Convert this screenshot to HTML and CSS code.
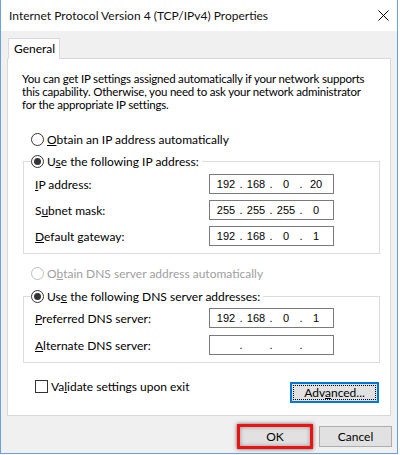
FILE: index.html
```html
<!DOCTYPE html>
<html lang="en">
<head>
    <meta charset="UTF-8">
    <title>Internet Protocol Version 4 (TCP/IPv4) Properties</title>
    <link rel="stylesheet" href="styles.css">
</head>
<body>
    <div class="window">
        <div class="titlebar">
            <span class="title">Internet Protocol Version 4 (TCP/IPv4) Properties</span>
            <svg class="close" width="11" height="11" viewBox="0 0 11 11">
                <path d="M0.5 0.5 L10.5 10.5 M10.5 0.5 L0.5 10.5" stroke="#000" stroke-width="1" fill="none"/>
            </svg>
        </div>

        <div class="client">
            <div class="tabs">
                <div class="tab">General</div>
            </div>

            <div class="panel">
                <div class="intro">
                    <div>You can get IP settings assigned automatically if your network supports</div>
                    <div>this capability. Otherwise, you need to ask your network administrator</div>
                    <div>for the appropriate IP settings.</div>
                </div>

                <!-- IP address -->
                <div class="option first">
                    <span class="radio"></span><span><u>O</u>btain an IP address automatically</span>
                </div>
                <fieldset class="group">
                    <legend>
                        <span class="option"><span class="radio checked"></span><span>U<u>s</u>e the following IP address:</span></span>
                    </legend>
                    <div class="fields">
                        <span class="label"><u>I</u>P address:</span>
                        <div class="ip"><span>192</span><i>.</i><span>168</span><i>.</i><span>0</span><i>.</i><span>20</span></div>
                        <span class="label">S<u>u</u>bnet mask:</span>
                        <div class="ip"><span>255</span><i>.</i><span>255</span><i>.</i><span>255</span><i>.</i><span>0</span></div>
                        <span class="label"><u>D</u>efault gateway:</span>
                        <div class="ip"><span>192</span><i>.</i><span>168</span><i>.</i><span>0</span><i>.</i><span>1</span></div>
                    </div>
                </fieldset>

                <!-- DNS -->
                <div class="option dns disabled">
                    <span class="radio"></span><span>O<u>b</u>tain DNS server address automatically</span>
                </div>
                <fieldset class="group dns-group">
                    <legend>
                        <span class="option"><span class="radio checked"></span><span>Us<u>e</u> the following DNS server addresses:</span></span>
                    </legend>
                    <div class="fields">
                        <span class="label"><u>P</u>referred DNS server:</span>
                        <div class="ip"><span>192</span><i>.</i><span>168</span><i>.</i><span>0</span><i>.</i><span>1</span></div>
                        <span class="label"><u>A</u>lternate DNS server:</span>
                        <div class="ip"><span></span><i>.</i><span></span><i>.</i><span></span><i>.</i><span></span></div>
                    </div>
                </fieldset>

                <div class="bottom-row">
                    <div class="option">
                        <span class="checkbox"></span><span>Va<u>l</u>idate settings upon exit</span>
                    </div>
                    <button class="btn advanced"><span class="focus">Adv<u>a</u>nced...</span></button>
                </div>
            </div>

            <div class="dialog-buttons">
                <button class="btn ok">OK</button>
                <button class="btn">Cancel</button>
            </div>
        </div>
    </div>
</body>
</html>
```

FILE: styles.css
```css
body {
    margin: 0;
    background-color: #fff;
    font-family: Lato, "Liberation Sans", sans-serif;
    font-size: 12px;
    color: #000;
}
.window {
    width: 398px;
    height: 454px;
    box-sizing: border-box;
    border: 1px solid #6ca0dc;
    border-top: none;
    background-color: #f0f0f0;
    display: flex;
    flex-direction: column;
}
.titlebar {
    height: 31px;
    flex-shrink: 0;
    background-color: #fff;
    display: flex;
    align-items: center;
    padding-left: 8px;
}
.title {
    font-size: 12px;
    color: #111;
}
.close {
    margin-left: auto;
    margin-right: 8px;
}
.client {
    padding: 7px 6px 0 6px;
}
.tabs {
    height: 20px;
    display: flex;
}
.tab {
    position: relative;
    z-index: 1;
    margin-left: 1px;
    width: 52px;
    height: 21px;
    box-sizing: border-box;
    border: 1px solid #d9d9d9;
    border-bottom: none;
    background-color: #fff;
    padding-left: 5px;
    line-height: 19px;
    margin-bottom: -1px;
}
.panel {
    height: 358px;
    box-sizing: border-box;
    border: 1px solid #d9d9d9;
    background-color: #fff;
}
.intro {
    margin: 13px 0 0 14px;
    font-size: 11.5px;
    white-space: nowrap;
    letter-spacing: -0.2px;
}
.intro div {
    height: 13px;
    line-height: 13px;
}
.option {
    display: flex;
    align-items: center;
    height: 16px;
    white-space: nowrap;
}
.option.first {
    margin: 20px 0 0 23px;
}
.option.dns {
    margin: 11px 0 0 23px;
}
.option.disabled {
    color: #a0a0a0;
}
.radio {
    width: 13px;
    height: 13px;
    box-sizing: border-box;
    border: 1px solid #333;
    border-radius: 50%;
    background-color: #fff;
    margin-right: 3px;
    display: flex;
    align-items: center;
    justify-content: center;
}
.radio.checked::after {
    content: "";
    width: 7px;
    height: 7px;
    border-radius: 50%;
    background-color: #333;
}
.disabled .radio {
    border-color: #bcbcbc;
}
.checkbox {
    width: 13px;
    height: 13px;
    box-sizing: border-box;
    border: 1px solid #333;
    background-color: #fff;
    margin-right: 3px;
}
.group {
    margin: 6px 10px 0 15px;
    padding: 0;
    border: 1px solid #dcdcdc;
    min-width: 0;
}
.group legend {
    margin-left: 7px;
    padding: 0 3px 0 0;
}
.fields {
    display: grid;
    grid-template-columns: 174px 125px;
    grid-auto-rows: 20px;
    row-gap: 6px;
    align-items: center;
    padding: 5px 0 7px 11px;
}
.dns-group {
    margin-top: 7px;
}
.dns-group .fields {
    padding: 4px 0 7px 11px;
    row-gap: 7px;
}
.ip {
    height: 20px;
    box-sizing: border-box;
    border: 1px solid #7a7a7a;
    display: grid;
    grid-template-columns: 24px 6px 24px 6px 24px 6px 24px;
    padding-left: 4px;
    font-family: "Liberation Sans", Arial, sans-serif;
    font-size: 11px;
    line-height: 18px;
    text-align: center;
}
.ip i {
    font-style: normal;
}
.bottom-row {
    display: flex;
    justify-content: space-between;
    align-items: flex-start;
    margin: 15px 11px 0 27px;
}
.btn {
    font-family: Lato, "Liberation Sans", sans-serif;
    font-size: 12px;
    color: #000;
    background-color: #e1e1e1;
    border: 1px solid #adadad;
    padding: 0;
    width: 73px;
    height: 21px;
}
.advanced {
    margin-top: 4px;
    width: 89px;
    height: 21px;
    border: 2px solid #0078d7;
    padding: 1px;
}
.advanced .focus {
    display: block;
    height: 100%;
    box-sizing: border-box;
    border: 1px dotted #000;
    line-height: 13px;
}
.dialog-buttons {
    display: flex;
    justify-content: flex-end;
    align-items: center;
    gap: 6px;
    height: 25px;
    padding-top: 8px;
    margin-right: -1px;
}
.ok {
    width: 76px;
    height: 25px;
    border: 3px solid #ee1111;
    box-shadow: 0 0 4px rgba(0, 0, 0, 0.6), inset 0 0 4px rgba(0, 0, 0, 0.35);
}
```
